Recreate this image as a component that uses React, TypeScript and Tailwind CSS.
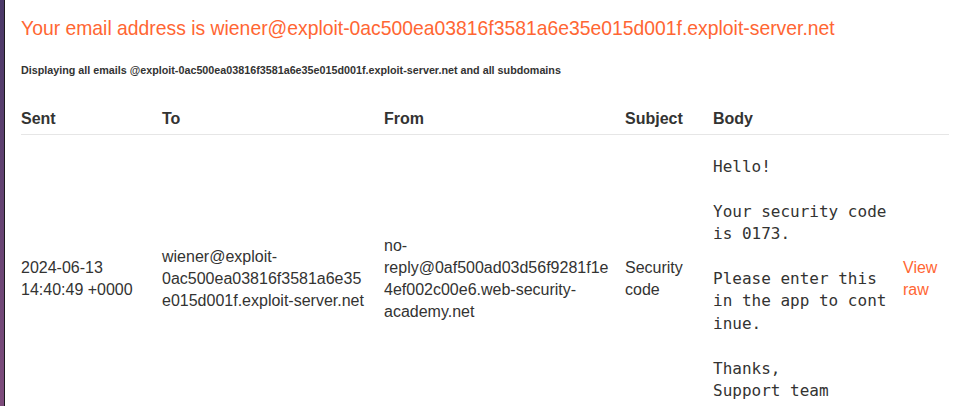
import React from 'react';

const emailAddress = 'wiener@exploit-0ac500ea03816f3581a6e35e015d001f.exploit-server.net';

const body = `Hello!

Your security code is 0173.

Please enter this in the app to continue.

Thanks,
Support team`;

export default function App() {
  return (
    <div className="flex min-h-screen bg-white font-['Liberation_Sans',Arial,sans-serif] text-[#333332]">
      {/* Side strip */}
      <div className="w-[4px] shrink-0 bg-gradient-to-b from-[#4a3868] to-[#7e4c7c]" />
      <div className="w-px shrink-0 bg-[#1c1a1e]" />

      {/* Content */}
      <div className="flex-1 pl-4 pr-[15px]">
        <h4 className="pt-4 text-[19.35px] leading-6 text-[#ff6633]">
          Your email address is {emailAddress}
        </h4>

        <h6 className="mt-[23px] text-[10.75px] font-bold leading-[14px] text-[#333332]">
          Displaying all emails @exploit-0ac500ea03816f3581a6e35e015d001f.exploit-server.net and all subdomains
        </h6>

        <table className="mt-[31px] w-full table-fixed border-collapse text-left text-[16px] leading-[22px]">
          <colgroup>
            <col className="w-[141px]" />
            <col className="w-[222px]" />
            <col className="w-[241px]" />
            <col className="w-[88px]" />
            <col className="w-[190px]" />
            <col />
          </colgroup>
          <thead>
            <tr className="border-b border-[#e6e6e6]">
              <th className="pr-4 pb-[4px] font-bold">Sent</th>
              <th className="pr-4 pb-[4px] font-bold">To</th>
              <th className="pr-4 pb-[4px] font-bold">From</th>
              <th className="pr-4 pb-[4px] font-bold">Subject</th>
              <th className="pr-4 pb-[4px] font-bold">Body</th>
              <th className="pb-[4px]" />
            </tr>
          </thead>
          <tbody>
            <tr>
              <td className="pr-4 pt-[21px] align-middle">2024-06-13 14:40:49 +0000</td>
              <td className="pr-4 pt-[21px] align-middle [overflow-wrap:anywhere]">{emailAddress}</td>
              <td className="pr-4 pt-[21px] align-middle [overflow-wrap:anywhere]">
                no-reply@0af500ad03d56f9281f1e4ef002c00e6.web-security-academy.net
              </td>
              <td className="pr-4 pt-[21px] align-middle">Security code</td>
              <td className="pr-4 pt-[21px] align-middle">
                <pre className="whitespace-pre-wrap break-all font-['DejaVu_Sans_Mono',monospace] text-[16px] leading-[22.4px] text-[#333332]">
                  {body}
                </pre>
              </td>
              <td className="pt-[21px] align-middle">
                <a href="#" className="text-[#ff6633]">
                  View raw
                </a>
              </td>
            </tr>
          </tbody>
        </table>
      </div>
    </div>
  );
}
